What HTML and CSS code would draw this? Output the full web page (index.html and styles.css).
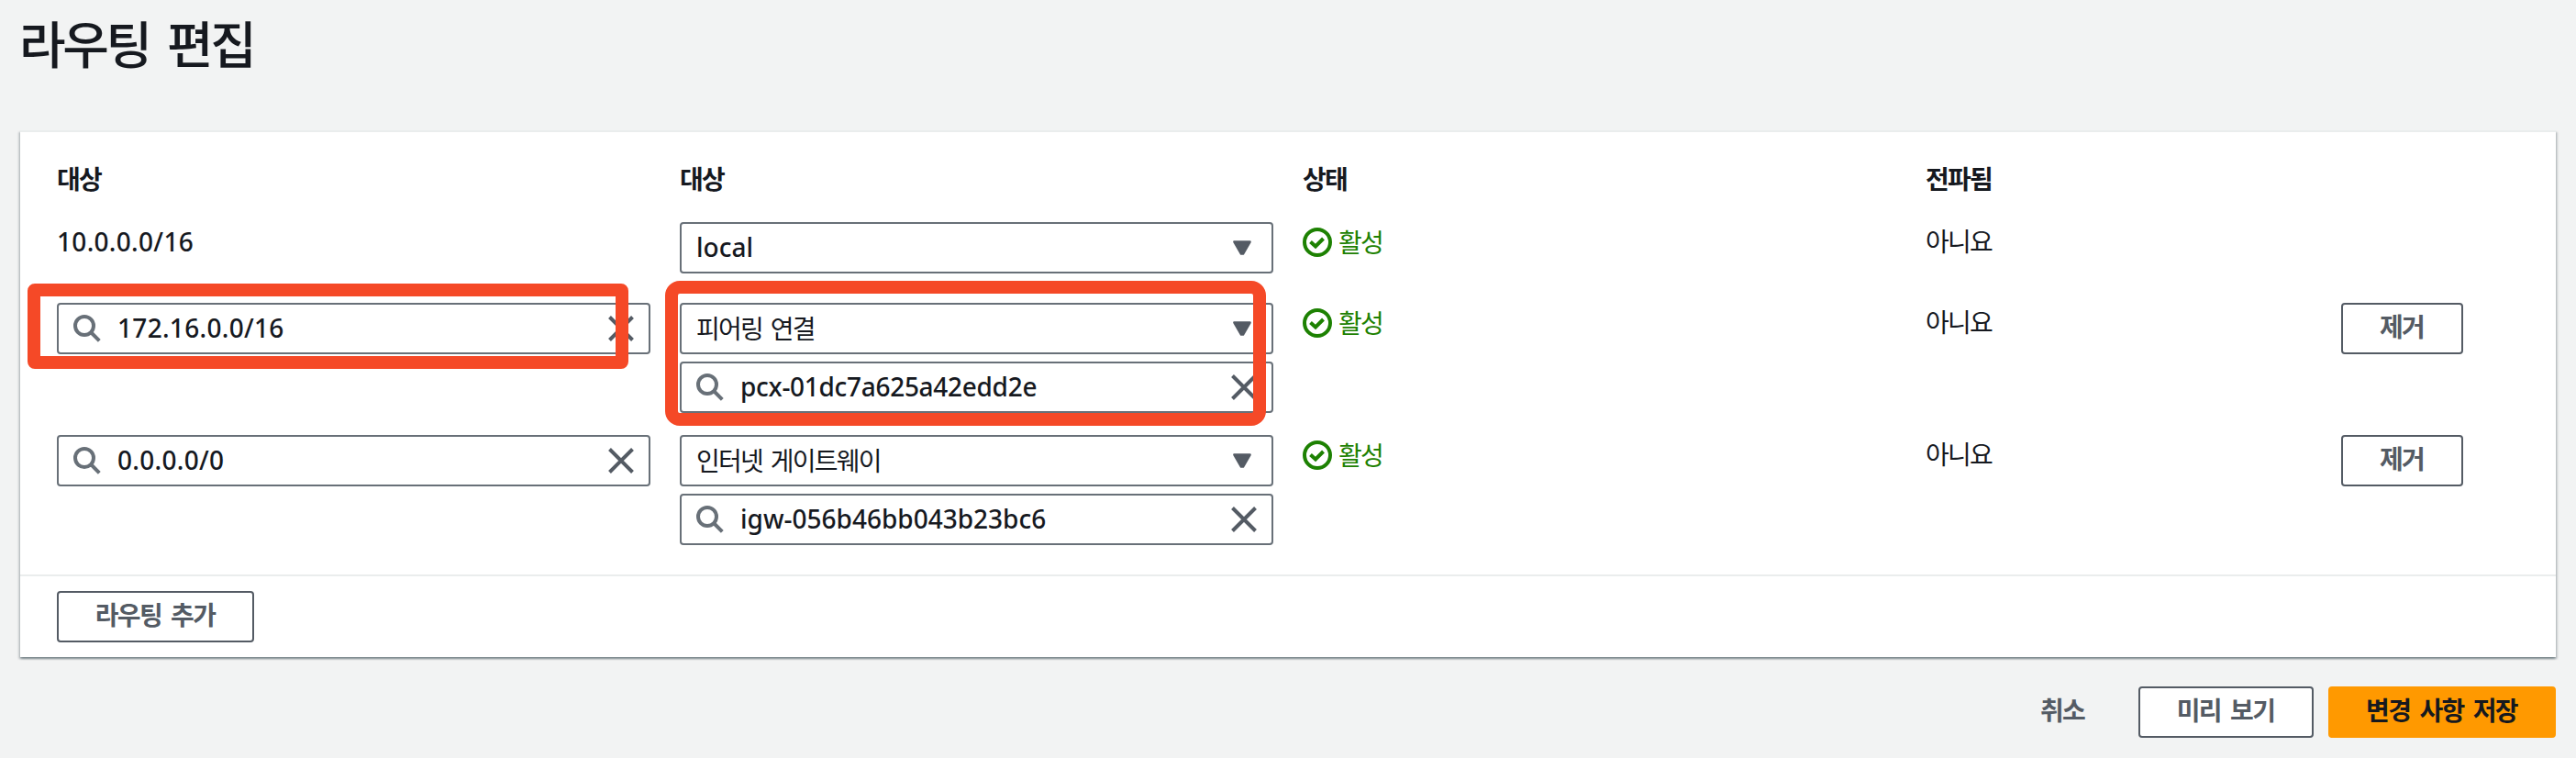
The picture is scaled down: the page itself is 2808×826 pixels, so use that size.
FILE: index.html
```html
<!DOCTYPE html>
<html lang="ko">
<head>
<meta charset="utf-8">
<title>라우팅 편집</title>
<link rel="stylesheet" href="styles.css">
</head>
<body>
<svg width="0" height="0" class="sprite" aria-hidden="true">
  <symbol id="search" viewBox="0 0 30 30"><circle cx="12" cy="12" r="10" fill="none" stroke="currentColor" stroke-width="4"/><path d="M18.5 18.5 28.3 28.3" stroke="currentColor" stroke-width="4"/></symbol>
  <symbol id="close" viewBox="0 0 28 28"><path d="M1.5 1.5 26.5 26.5M26.5 1.5 1.5 26.5" stroke="currentColor" stroke-width="4"/></symbol>
  <symbol id="caret" viewBox="0 0 20 16"><path d="M1.5 1.5H18.5L11 14.5H9Z" fill="currentColor" stroke="currentColor" stroke-width="2.6" stroke-linejoin="round"/></symbol>
  <symbol id="check" viewBox="0 0 32 32"><circle cx="16" cy="16" r="14" fill="none" stroke="currentColor" stroke-width="4"/><path d="M8.5 15.5 14 20.5 22.5 12" fill="none" stroke="currentColor" stroke-width="4"/></symbol>
</svg>
<main class="page">
  <h1 class="title">라우팅 편집</h1>
  <section class="card">
    <div class="routes">
      <div class="row head"><div>대상</div><div>대상</div><div>상태</div><div>전파됨</div></div>
      <div class="row">
        <div class="latin cidr">10.0.0.0/16</div>
        <div class="stack">
          <div class="field"><span class="latin">local</span><svg class="caret"><use href="#caret"/></svg></div>
        </div>
        <div class="status"><svg class="check"><use href="#check"/></svg><span>활성</span></div>
        <div class="text">아니요</div>
      </div>
      <div class="row">
        <div class="stack">
          <div class="field"><svg class="search"><use href="#search"/></svg><span class="latin cidr">172.16.0.0/16</span><svg class="close"><use href="#close"/></svg></div>
        </div>
        <div class="stack">
          <div class="field"><span>피어링 연결</span><svg class="caret"><use href="#caret"/></svg></div>
          <div class="field"><svg class="search"><use href="#search"/></svg><span class="latin peering">pcx-01dc7a625a42edd2e</span><svg class="close"><use href="#close"/></svg></div>
        </div>
        <div class="status"><svg class="check"><use href="#check"/></svg><span>활성</span></div>
        <div class="text">아니요</div>
        <button class="btn remove">제거</button>
      </div>
      <div class="row">
        <div class="stack">
          <div class="field"><svg class="search"><use href="#search"/></svg><span class="latin cidr">0.0.0.0/0</span><svg class="close"><use href="#close"/></svg></div>
        </div>
        <div class="stack">
          <div class="field"><span>인터넷 게이트웨이</span><svg class="caret"><use href="#caret"/></svg></div>
          <div class="field"><svg class="search"><use href="#search"/></svg><span class="latin">igw-056b46bb043b23bc6</span><svg class="close"><use href="#close"/></svg></div>
        </div>
        <div class="status"><svg class="check"><use href="#check"/></svg><span>활성</span></div>
        <div class="text">아니요</div>
        <button class="btn remove">제거</button>
      </div>
    </div>
    <div class="card-footer"><button class="btn add">라우팅 추가</button></div>
  </section>
  <div class="actions">
    <button class="btn cancel">취소</button>
    <button class="btn preview">미리 보기</button>
    <button class="btn save">변경 사항 저장</button>
  </div>
</main>
<div class="mark mark-destination"></div>
<div class="mark mark-target"></div>
</body>
</html>
```
FILE: styles.css
```css
* { box-sizing: border-box; }
body {
  margin: 0;
  height: 826px;
  overflow: hidden;
  background: #f2f3f3;
  color: #16191f;
  font: 28px/44px "Noto Sans CJK KR", "Noto Sans", sans-serif;
  letter-spacing: -0.062em;
  word-spacing: 2.5px;
}
.sprite { position: absolute; }
.page { padding: 0 22px; }
.title {
  margin: 0 0 0 -1px;
  height: 142px;
  padding-top: 9px;
  font-size: 55px;
  line-height: 72px;
  font-weight: 500;
  letter-spacing: -0.06em;
  word-spacing: 7px;
}
.latin { font-family: "Noto Sans", sans-serif; font-weight: 500; letter-spacing: 0; }
.cidr { line-height: 43px; letter-spacing: 0.3px; }
.field .peering { letter-spacing: -0.3px; }
.card {
  height: 574px;
  border-top: 2px solid #eaeded;
  background: #fff;
  box-shadow: 0 2px 2px rgba(0, 28, 36, .3), 2px 2px 2px rgba(0, 28, 36, .15), -2px 2px 2px rgba(0, 28, 36, .15);
}
.routes {
  display: flex;
  flex-direction: column;
  height: 482px;
  padding: 28px 40px 32px;
}
.row {
  display: grid;
  grid-template-columns: 647px 647px 647px 421px 133px;
  column-gap: 32px;
  align-items: start;
  margin-bottom: 24px;
}
.row:nth-child(2) { margin-bottom: 32px; }
.head { margin-bottom: 26px; font-weight: 700; }
.stack { display: flex; flex-direction: column; gap: 8px; }
.field {
  display: flex;
  align-items: center;
  height: 56px;
  padding: 0 16px;
  border: 2px solid #687078;
  border-radius: 4px;
}
.field span { padding-bottom: 2px; }
.search { width: 30px; height: 30px; margin-right: 18px; color: #687078; }
.close { width: 28px; height: 28px; margin-left: auto; color: #545b64; }
.caret { width: 20px; height: 16px; margin: 0 6px 0 auto; color: #545b64; }
.check { width: 32px; height: 32px; margin-right: 7px; }
.status { display: flex; align-items: center; height: 44px; color: #1d8102; }
.status span { padding-bottom: 3px; }
.text { line-height: 41px; }
.btn {
  height: 56px;
  padding: 0 1px 6px 0;
  border: 2px solid #545b64;
  border-radius: 4px;
  background: #fff;
  color: #545b64;
  font: inherit;
  font-weight: 700;
  letter-spacing: -0.06em;
  word-spacing: 4px;
}
.card-footer { height: 90px; padding: 16px 40px; border-top: 2px solid #eaeded; }
.add { width: 215px; }
.actions { display: flex; justify-content: flex-end; gap: 16px; margin-top: 32px; }
.cancel { width: 133px; border-color: transparent; background: none; }
.preview { width: 191px; }
.save { width: 248px; border-color: #f90; background: #f90; color: #16191f; }
.mark { position: absolute; border: 14px solid #f54927; }
.mark-destination { left: 30px; top: 309px; width: 655px; height: 93px; border-radius: 8px; }
.mark-target { left: 725px; top: 306px; width: 655px; height: 158px; border-radius: 16px; }
```
